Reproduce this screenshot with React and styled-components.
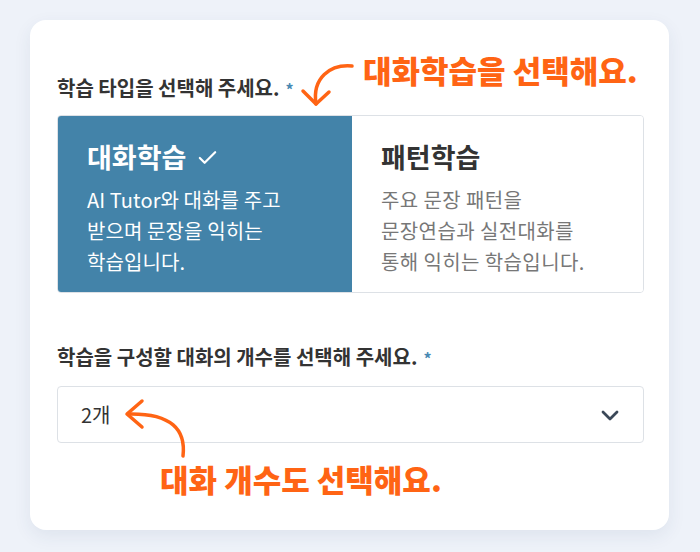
import React from "react";
import styled, { createGlobalStyle } from "styled-components";

const GlobalStyle = createGlobalStyle`
  html, body {
    margin: 0;
    padding: 0;
    background: #eef2f9;
  }
  body {
    font-family: "Noto Sans CJK KR", "Noto Sans", sans-serif;
    color: #333;
  }
`;

const Page = styled.div`
  padding: 20px 31px 21px 30px;
`;

const Card = styled.div`
  position: relative;
  background: #fff;
  border-radius: 16px;
  padding: 55px 25px 87px 27px;
  box-shadow: 0 6px 18px rgba(40, 60, 100, 0.08);
`;

const Label = styled.div`
  font-size: 20px;
  font-weight: 700;
  line-height: 26px;
  color: #333;
  margin-bottom: ${(p) => p.$gap || 13}px;
  margin-top: ${(p) => p.$top || 0}px;
`;

const Required = styled.span`
  color: #4a8ab3;
  font-size: 16px;
  margin-left: 6px;
`;

const OptionGroup = styled.div`
  display: grid;
  grid-template-columns: 294px 1fr;
  border: 1px solid #dde1e6;
  border-radius: 4px;
  overflow: hidden;
`;

const Option = styled.div`
  background: ${(p) => (p.$selected ? "#4383a9" : "#fff")};
  color: ${(p) => (p.$selected ? "#fff" : "#333")};
  padding: 24px 12px 15px 29px;
  box-sizing: border-box;
`;

const OptionTitle = styled.div`
  display: flex;
  align-items: center;
  gap: 10px;
  font-size: 27px;
  font-weight: 700;
  line-height: 34px;
  margin-bottom: 10px;
`;

const OptionDesc = styled.div`
  font-size: 20px;
  line-height: 31px;
  letter-spacing: ${(p) => (p.$selected ? "0.1px" : "0.4px")};
  color: ${(p) => (p.$selected ? "#fff" : "#777")};
`;

const Select = styled.div`
  display: flex;
  align-items: center;
  justify-content: space-between;
  height: 57px;
  box-sizing: border-box;
  border: 1px solid #dde1e6;
  border-radius: 4px;
  padding: 0 21px 0 23px;
  font-size: 20px;
  color: #333;
`;

const Note = styled.div`
  position: absolute;
  left: ${(p) => p.$x}px;
  top: ${(p) => p.$y}px;
  font-size: 31px;
  font-weight: 900;
  line-height: 1;
  letter-spacing: 0;
  color: #ff6414;
  white-space: nowrap;
`;

const ArrowSvg = styled.svg`
  position: absolute;
  left: ${(p) => p.$x}px;
  top: ${(p) => p.$y}px;
  overflow: visible;
`;

const Check = () => (
  <svg width="23" height="23" viewBox="0 0 24 24" fill="none" stroke="#fff" strokeWidth="2.3" strokeLinecap="round" strokeLinejoin="round">
    <path d="M4 12.5l5 5L20 6.5" />
  </svg>
);

const Chevron = () => (
  <svg width="24" height="24" viewBox="0 0 24 24" fill="none" stroke="#3b4858" strokeWidth="2.8" strokeLinecap="round" strokeLinejoin="round">
    <path d="M5 9l7 7 7-7" />
  </svg>
);

const App = () => {
  return (
    <React.Fragment>
      <GlobalStyle />
      <Page>
        <Card>
          <Label>
            학습 타입을 선택해 주세요.<Required>*</Required>
          </Label>
          <OptionGroup>
            <Option $selected>
              <OptionTitle>
                대화학습 <Check />
              </OptionTitle>
              <OptionDesc $selected>
                AI Tutor와 대화를 주고
                <br />
                받으며 문장을 익히는
                <br />
                학습입니다.
              </OptionDesc>
            </Option>
            <Option>
              <OptionTitle>패턴학습</OptionTitle>
              <OptionDesc>
                주요 문장 패턴을
                <br />
                문장연습과 실전대화를
                <br />
                통해 익히는 학습입니다.
              </OptionDesc>
            </Option>
          </OptionGroup>

          <Label $top={51} $gap={15}>
            학습을 구성할 대화의 개수를 선택해 주세요.<Required>*</Required>
          </Label>
          <Select>
            <span>2개</span>
            <Chevron />
          </Select>

          <Note $x={333} $y={34}>대화학습을 선택해요.</Note>
          <ArrowSvg $x={265} $y={35} width="70" height="60" fill="none" stroke="#ff6414" strokeWidth="3.5" strokeLinecap="round" strokeLinejoin="round">
            <path d="M57 11C35 9 17 23 21 49" />
            <path d="M8 36L21 49L34 37" />
          </ArrowSvg>

          <Note $x={130} $y={443}>대화 개수도 선택해요.</Note>
          <ArrowSvg $x={85} $y={375} width="80" height="70" fill="none" stroke="#ff6414" strokeWidth="3.5" strokeLinecap="round" strokeLinejoin="round">
            <path d="M68 61C71 35 57 18 13 19" />
            <path d="M27 6L12 19L27 32" />
          </ArrowSvg>
        </Card>
      </Page>
    </React.Fragment>
  );
};

export default App;
